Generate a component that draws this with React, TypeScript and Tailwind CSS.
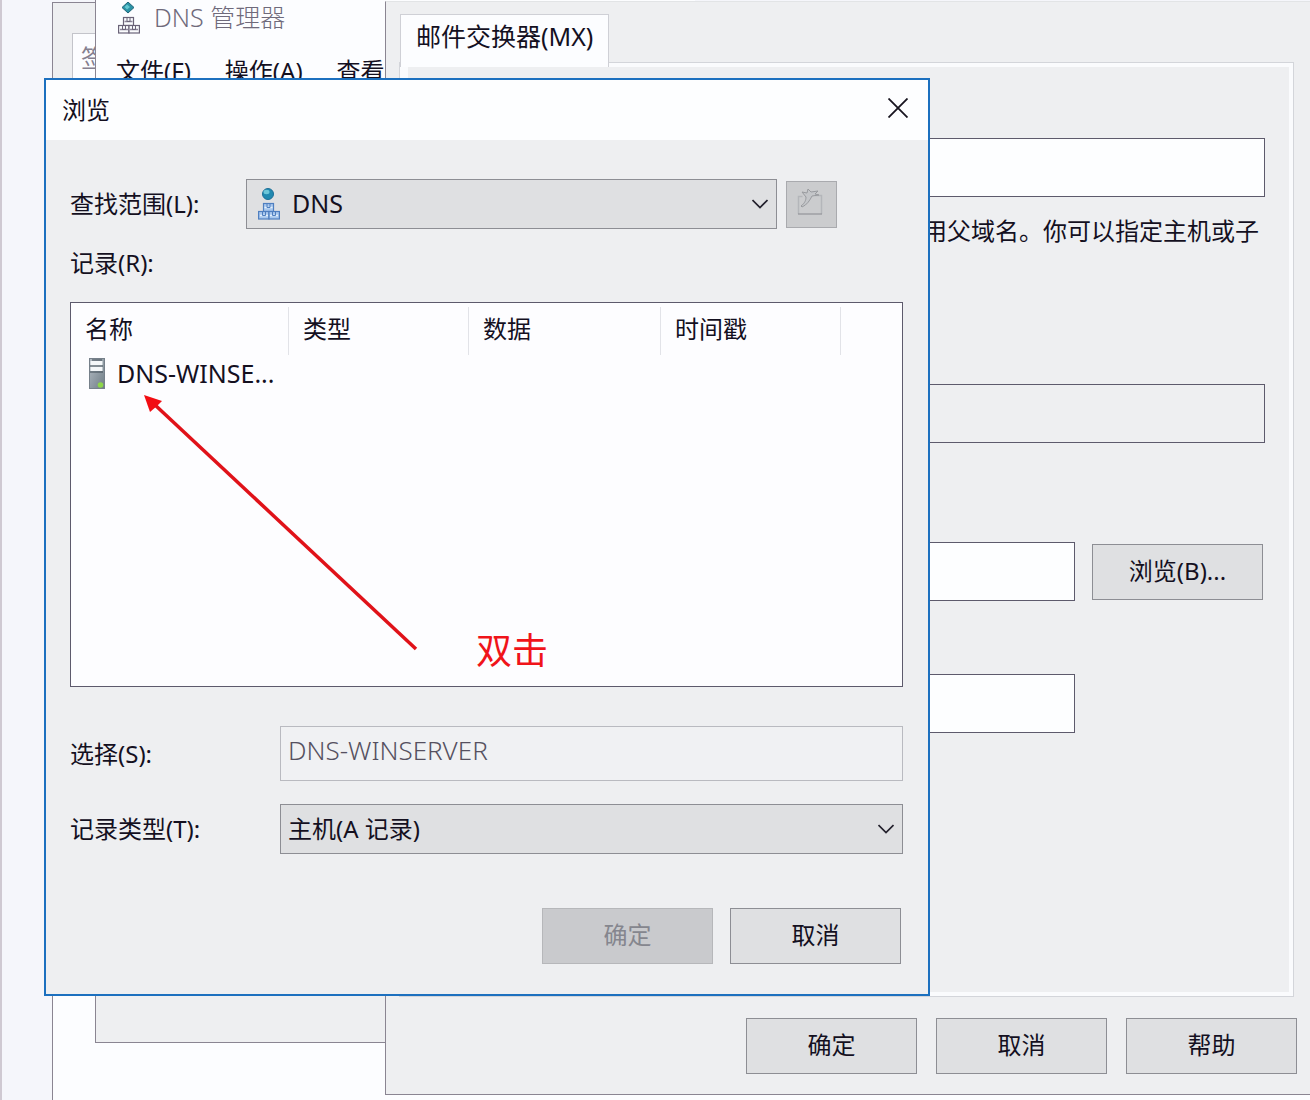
import React, { useState } from 'react';
import clsx from 'clsx';

const ZoneIcon: React.FC<{ shape: 'diamond' | 'globe'; className?: string }> = ({ shape, className }) => {
    const stroke = shape === 'diamond' ? '#6a6378' : '#4f7fc0';
    const fill = shape === 'diamond' ? '#fbfcfe' : '#a9c8ee';
    const detail = shape === 'diamond' ? '#8d869a' : '#e6f1fc';
    return (
        <svg viewBox="0 0 22 32" className={clsx('h-8 w-[22px]', className)} aria-hidden="true">
            {shape === 'diamond' ? (
                <>
                    <path d="M10 0 L16 5.500 L10 11 L4 5.500 Z" fill="#2b93a6" stroke="#1f6478" />
                    <path d="M9 2.500 L12 5 L9 7.500 L6.500 5 Z" fill="#63c8d2" />
                </>
            ) : (
                <>
                    <circle cx="10" cy="6" r="5.5" fill="#2189b0" stroke="#1c6f98" />
                    <ellipse cx="8.5" cy="4" rx="3" ry="2.2" fill="#6cc6d8" />
                </>
            )}
            <g fill={fill} stroke={stroke} strokeWidth="1.2">
                <rect x="5.5" y="15.5" width="10" height="8" />
                <rect x="0.6" y="23.5" width="10.4" height="7.5" />
                <rect x="11" y="23.5" width="10.4" height="7.5" />
            </g>
            <path d="M6.500 19.500h8 M2 27.500h8 M12 27.500h8" stroke={detail} strokeWidth="1.4" />
            <path d="M9 16v3.500h3v-3.500 M4.500 24v3.500h3v-3.500 M14.500 24v3.500h3v-3.500" fill="none" stroke={stroke} />
        </svg>
    );
};

const ServerIcon = () => (
    <svg viewBox="0 0 16 31" className="h-[31px] w-4 shrink-0" aria-hidden="true">
        <defs>
            <linearGradient id="tower" x1="0" y1="0" x2="1" y2="1">
                <stop offset="0" stopColor="#b4bcc4" />
                <stop offset="1" stopColor="#6f7d86" />
            </linearGradient>
        </defs>
        <rect x="0.5" y="0.5" width="15" height="30" fill="url(#tower)" stroke="#76808a" />
        <rect x="1.5" y="3" width="12" height="4.5" fill="#f4f7f9" />
        <rect x="1.5" y="8.5" width="12" height="4.5" fill="#f4f7f9" />
        <path d="M3 2h10 M1 8h13 M1 14h13" stroke="#3f4a54" strokeWidth="1.2" />
        <circle cx="11.5" cy="27" r="2.8" fill="#8ed64a" />
    </svg>
);

const NewFolderIcon = () => (
    <svg viewBox="0 0 28 28" className="h-7 w-7" fill="none" aria-hidden="true">
        <path d="M2.500 26V8.500h4M19 7.500h6.500v18.500" stroke="#b4b6ba" strokeWidth="1.5" />
        <path d="M2 26h24" stroke="#96989c" strokeWidth="1.3" />
        <path
            d="M5 18 C9 15 10 12 10 9 L6 4 L11 5 L12 1 L15 4 L22 3 L19 6 L23 7 L16 8 C14 12 11 17 6 19 Z"
            fill="#c4c6c9"
            stroke="#999b9f"
        />
    </svg>
);

const Chevron = () => (
    <svg
        viewBox="0 0 16 10"
        className="pointer-events-none absolute top-1/2 right-[9px] h-[10px] w-4 -translate-y-1/2"
        fill="none"
        aria-hidden="true"
    >
        <path d="M0.500 1 L8 8.500 L15.500 1" stroke="#23202c" strokeWidth="1.7" />
    </svg>
);

const PushButton: React.FC<React.ButtonHTMLAttributes<HTMLButtonElement>> = ({ className, ...props }) => (
    <button
        type="button"
        className={clsx(
            'h-14 w-[171px] border pb-[2px]',
            props.disabled ? 'border-[#b6b7ba] bg-[#c9cacd] text-[#85868e]' : 'border-[#8d8e94] bg-[#dfe0e2]',
            className,
        )}
        {...props}
    />
);

const COLUMNS = [
    { label: '名称', width: 'w-[218px]' },
    { label: '类型', width: 'w-[180px]' },
    { label: '数据', width: 'w-[192px]' },
    { label: '时间戳', width: 'w-[180px]' },
];

const RecordList = () => (
    <div className="relative mt-[23px] h-[385px] border border-[#5d5a6c] bg-[#fdfdff]">
        <table className="w-full table-fixed border-collapse text-left">
            <thead>
                <tr className="h-[52px]">
                    {COLUMNS.map((column) => (
                        <th key={column.label} className={clsx('p-0 font-normal', column.width)}>
                            <div className="mt-1 h-12 border-r border-[#e2e3e8] pl-[14px] leading-[44px]">{column.label}</div>
                        </th>
                    ))}
                    <td />
                </tr>
            </thead>
            <tbody>
                <tr className="h-[38px]">
                    <td className="p-0">
                        <div className="flex items-center gap-3 pl-[18px]">
                            <ServerIcon />
                            <span className="text-[25px] whitespace-nowrap">DNS-WINSE...</span>
                        </div>
                    </td>
                    <td colSpan={4} />
                </tr>
            </tbody>
        </table>

        {/* Annotation on top of the list */}
        <svg viewBox="0 0 280 260" className="absolute top-[90px] left-[71px] h-[260px] w-[280px]" aria-hidden="true">
            <path d="M12 11 L274 256" stroke="#e01219" strokeWidth="3.5" />
            <path d="M2 2 L20 8 L15 13 L8 19 Z" fill="#f20d12" />
        </svg>
        <p className="absolute top-[324px] left-[405px] text-4xl leading-[48px] text-[#f0141a]">双击</p>
    </div>
);

const BrowseDialog = () => {
    const [scope, setScope] = useState('DNS');
    const [recordType, setRecordType] = useState('a');

    return (
        <section
            role="dialog"
            aria-labelledby="browse-title"
            className="absolute top-[78px] left-11 w-[886px] border-2 border-[#1c70bf] bg-[#eeeff1]"
        >
            <header className="flex h-[60px] items-center justify-between bg-[#fdfeff] pr-5 pl-4">
                <h2 id="browse-title">浏览</h2>
                <button type="button" aria-label="关闭" className="pb-1">
                    <svg viewBox="0 0 20 20" className="h-5 w-5" aria-hidden="true">
                        <path d="M0.500 0.500 L19.500 19.500 M19.500 0.500 L0.500 19.500" stroke="#17141f" strokeWidth="1.8" />
                    </svg>
                </button>
            </header>

            <div className="pt-[39px] pr-[25px] pb-[30px] pl-6">
                <div className="flex h-[50px] items-center">
                    <label htmlFor="scope" className="w-44">查找范围(L):</label>
                    <div className="relative w-[531px]">
                        <ZoneIcon shape="globe" className="pointer-events-none absolute top-[9px] left-3" />
                        <select
                            id="scope"
                            value={scope}
                            onChange={(e) => setScope(e.target.value)}
                            className="h-[50px] w-full appearance-none border border-[#8d8e94] bg-[#dfe0e2] pl-[45px] text-[25px]"
                        >
                            <option>DNS</option>
                        </select>
                        <Chevron />
                    </div>
                    <button
                        type="button"
                        disabled
                        aria-label="新建"
                        className="ml-[9px] flex h-[47px] w-[51px] items-center justify-center border border-[#a9aaae] bg-[#cbccce] pr-1 pb-1"
                    >
                        <NewFolderIcon />
                    </button>
                </div>

                <p className="mt-[18px]">记录(R):</p>
                <RecordList />

                <div className="mt-[39px] flex items-center">
                    <label htmlFor="selection" className="w-[210px]">选择(S):</label>
                    <input
                        id="selection"
                        readOnly
                        value="DNS-WINSERVER"
                        className="h-[55px] min-w-0 flex-1 border border-[#b9bac0] bg-[#f0f1f3] px-[7px] pb-2 text-[26px] font-light text-[#55505f]"
                    />
                </div>

                <div className="mt-[23px] flex items-center">
                    <label htmlFor="record-type" className="w-[210px]">记录类型(T):</label>
                    <div className="relative flex-1">
                        <select
                            id="record-type"
                            value={recordType}
                            onChange={(e) => setRecordType(e.target.value)}
                            className="h-[50px] w-full appearance-none border border-[#8d8e94] bg-[#dfe0e2] pl-[7px]"
                        >
                            <option value="a">主机(A 记录)</option>
                        </select>
                        <Chevron />
                    </div>
                </div>

                <div className="mt-[54px] flex justify-end gap-[17px] pr-[2px]">
                    <PushButton disabled>确定</PushButton>
                    <PushButton>取消</PushButton>
                </div>
            </div>
        </section>
    );
};

const MailExchangerWindow = () => (
    <section className="absolute top-px right-0 bottom-[5px] left-[385px] flex flex-col border border-r-0 border-t-[#e2e4e6] border-b-[#8a8592] border-l-[#8a8592] bg-[#eeeff1] pt-3 pr-[17px] pl-[14px]">
        <div role="tablist" className="relative z-10 -mb-1 flex">
            <button
                type="button"
                role="tab"
                aria-selected="true"
                className="h-[53px] border border-b-0 border-[#cfd0d6] bg-[#fcfdff] px-[15px] pb-2 text-[25px]"
            >
                邮件交换器(MX)
            </button>
        </div>
        <div className="flex-1 border-4 border-l-8 border-[#fafbfd] pt-[71px] pr-6 pl-4 outline outline-[#d3d5da]">
            <input aria-label="主机或子域" className="h-[59px] w-full border border-[#5d5a6c] bg-[#fdfeff] px-2" />
            <p className="mt-[18px] pr-[6px] text-right whitespace-nowrap">用父域名。你可以指定主机或子</p>
            <input
                aria-label="完全限定的域名"
                readOnly
                className="mt-[137px] h-[59px] w-full border border-[#5d5a6c] bg-[#eeeff1] px-2"
            />
            <div className="mt-[99px] flex items-center gap-[17px] pr-[2px]">
                <input
                    aria-label="邮件服务器"
                    className="h-[59px] min-w-0 flex-1 border border-[#5d5a6c] bg-[#fdfeff] px-2"
                />
                <PushButton>浏览(B)...</PushButton>
            </div>
            <div className="mt-[73px] pr-[190px]">
                <input
                    aria-label="邮件服务器优先级"
                    className="h-[59px] w-full border border-[#5d5a6c] bg-[#fdfeff] px-2"
                />
            </div>
        </div>
        <footer className="-mr-1 flex justify-end gap-[19px] pt-[22px] pb-5">
            <PushButton>确定</PushButton>
            <PushButton>取消</PushButton>
            <PushButton>帮助</PushButton>
        </footer>
    </section>
);

const DnsManagerWindow = () => (
    <section className="absolute top-0 bottom-[57px] left-[95px] flex w-[600px] flex-col border border-t-0 border-r-0 border-[#8a8592] bg-[#fcfdff]">
        <header className="flex h-9 items-center gap-[14px] pl-[22px] text-[25px] font-light text-[#6f6a7b]">
            <ZoneIcon shape="diamond" />
            <h1>DNS 管理器</h1>
        </header>
        <nav className="flex h-[70px] items-center gap-[34px] pl-5">
            <button type="button">文件(F)</button>
            <button type="button">操作(A)</button>
            <button type="button">查看(V)</button>
        </nav>
        <div className="flex-1" />
        <footer className="h-[46px] bg-[#eeeff1]" />
    </section>
);

const BackgroundWindow = () => (
    <section className="absolute top-[2px] right-0 bottom-0 left-[52px] flex flex-col border-t border-l border-[#8a8592] bg-[#eeeff1] pt-[30px]">
        <div className="ml-[19px] h-[60px] border border-[#c3c4ca] bg-[#fcfdff] pt-2 pl-2 text-[#85808f]">签</div>
        <div className="flex-1 bg-[#fcfdff]" />
    </section>
);

export default function App() {
    return (
        <main className="relative min-h-screen w-full overflow-hidden border-l-2 border-[#cfc9d2] bg-[#f5f6fb] font-['Noto_Sans','Noto_Sans_CJK_SC',sans-serif] text-2xl text-[#14101f]">
            <div className="absolute inset-y-0 right-0 -left-[2px]">
                <BackgroundWindow />
                <DnsManagerWindow />
                <MailExchangerWindow />
                <BrowseDialog />
            </div>
        </main>
    );
}
